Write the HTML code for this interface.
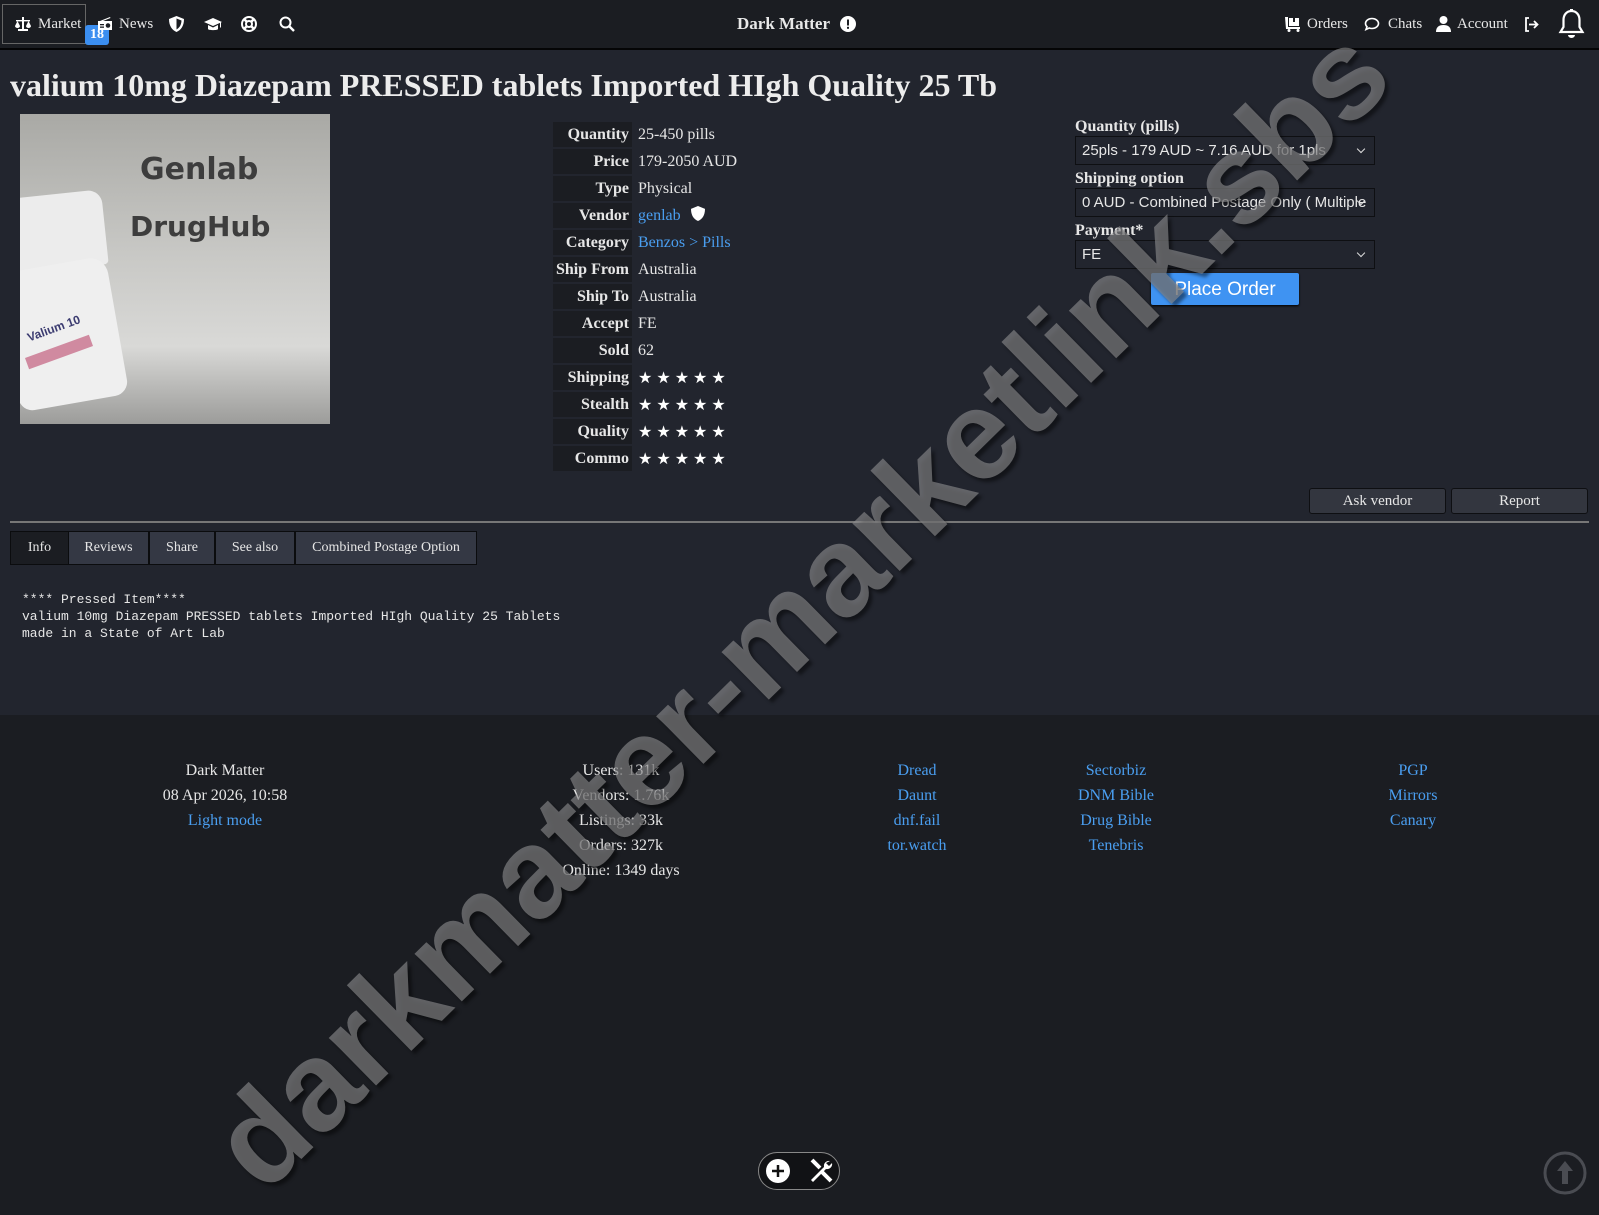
<!DOCTYPE html>
<html><head><meta charset="utf-8"><style>
*{box-sizing:border-box;margin:0;padding:0}
html,body{width:1599px;height:1199px;overflow:hidden;background:#1b1d22;font-family:"Liberation Serif",serif;color:#e6e6e6;font-size:16px}
a{color:#4a9ef0;text-decoration:none}
.main{position:absolute;left:0;top:0;width:1599px;height:715px;background:#22252e}
.hdr{position:absolute;left:0;top:0;width:1599px;height:50px;background:#1b1d22;border-bottom:2px solid #050506}
.nav{position:absolute;top:0;height:48px;display:flex;align-items:center;font-size:15px;color:#e8e8e8}
.nav svg{fill:#fff}
.fc{position:absolute;text-align:center;line-height:25px;font-size:16px}
.tbl{position:absolute;left:553px;top:121px}
.row{display:flex;height:27px;align-items:center}
.row .l{width:79px;height:25px;background:#1b1d22;text-align:right;font-weight:bold;padding-right:3px;line-height:25px;font-size:16px}
.row .v{padding-left:6px;line-height:25px}
.stars{letter-spacing:4px;font-size:16px;color:#fff;font-family:"DejaVu Sans",sans-serif}
.lbl{position:absolute;left:1075px;font-weight:bold;font-size:16px}
.sel{position:absolute;left:1075px;width:300px;height:29px;border:1px solid #0e0f12;background:#22252e;font-family:"Liberation Sans",sans-serif;font-size:15px;line-height:27px;padding-left:6px;padding-right:22px;color:#e6e6e6;white-space:nowrap;overflow:hidden}
.sel:after{content:"";position:absolute;right:10px;top:9px;width:5px;height:5px;border-right:1.5px solid #ddd;border-bottom:1.5px solid #ddd;transform:rotate(45deg)}
.btn{position:absolute;height:26px;background:#33363f;border:1px solid #0e0f12;border-radius:3px;text-align:center;line-height:24px;font-size:15px}
.tab{position:absolute;top:531px;height:34px;background:#343844;border:1px solid #0b0c0e;text-align:center;line-height:32px;font-size:14px}
.wm{position:absolute;left:800px;top:608px;transform:translate(-50%,-50%) rotate(-44.5deg);font-family:"Liberation Sans",sans-serif;font-weight:bold;font-size:127px;color:rgba(140,140,142,.62);white-space:nowrap;text-shadow:0 5px 3px rgba(0,0,0,.45);line-height:1}
</style></head><body>
<div class="main"></div>
<div class="hdr"></div>
<div style="position:absolute;left:2px;top:4px;width:84px;height:40px;border:1px solid #666;"></div>
<div class="nav" style="left:14px"><svg width="18" height="16" viewBox="0 0 18 16"><path d="M8 1h2v12h4v2H4v-2h4z"/><path d="M2 4h14v1.4H2z"/><path d="M3.5 5L1 10a2.5 2 0 0 0 5 0zM14.5 5L12 10a2.5 2 0 0 0 5 0z"/></svg><span style="margin-left:6px">Market</span></div>
<div style="position:absolute;left:85px;top:25px;width:24px;height:20px;background:#3b8ef0;border-radius:3px;color:#fff;font-weight:bold;font-size:14px;text-align:center;line-height:20px">18</div>
<div class="nav" style="left:97px"><svg width="16" height="14" viewBox="0 0 16 14"><path d="M1 4h14v9H1z"/><path d="M3 4L13 0l.5 1L6 4z"/><circle cx="11" cy="8.5" r="2.3" fill="#1b1d22"/><rect x="3" y="7" width="4" height="1.3" fill="#1b1d22"/><rect x="3" y="9.5" width="4" height="1.3" fill="#1b1d22"/></svg><span style="margin-left:6px">News</span></div>
<div class="nav" style="left:169px"><svg width="15" height="16" viewBox="0 0 15 16"><path d="M7.5 0L15 3c0 7-3 11-7.5 13C3 14 0 10 0 3z"/><path d="M7.5 2.5v11c2.5-1.5 4.8-4 5-9z" fill="#1b1d22"/></svg></div>
<div class="nav" style="left:204px"><svg width="18" height="15" viewBox="0 0 18 15"><path d="M9 1L0 5l9 4 9-4z"/><path d="M4 8v4c0 1.5 10 1.5 10 0V8L9 10.5z"/><path d="M16 5.5v5h1v-5z"/></svg></div>
<div class="nav" style="left:241px"><svg width="16" height="16" viewBox="0 0 16 16"><circle cx="8" cy="8" r="7" fill="none" stroke="#fff" stroke-width="2"/><circle cx="8" cy="8" r="3" fill="none" stroke="#fff" stroke-width="2"/><path d="M3 3l3 3M13 3l-3 3M3 13l3-3M13 13l-3-3" stroke="#fff" stroke-width="2.5"/></svg></div>
<div class="nav" style="left:279px"><svg width="16" height="16" viewBox="0 0 16 16"><circle cx="6.5" cy="6.5" r="5" fill="none" stroke="#fff" stroke-width="2"/><path d="M10 10l5 5" stroke="#fff" stroke-width="2.4"/></svg></div>
<div class="nav" style="left:737px;font-weight:bold;font-size:17px">Dark Matter</div>
<div class="nav" style="left:840px"><svg width="16" height="16" viewBox="0 0 16 16"><circle cx="8" cy="8" r="8"/><rect x="7" y="3.5" width="2" height="6" fill="#1b1d22"/><rect x="7" y="10.8" width="2" height="2" fill="#1b1d22"/></svg></div>
<div class="nav" style="left:1285px"><svg width="16" height="16" viewBox="0 0 16 16"><path d="M0 1h3v10h12v2H1z"/><rect x="4" y="2" width="10" height="8"/><rect x="8" y="2" width="2" height="4" fill="#1b1d22"/><circle cx="4" cy="14.5" r="1.5"/><circle cx="13" cy="14.5" r="1.5"/></svg><span style="margin-left:6px">Orders</span></div>
<div class="nav" style="left:1364px"><svg width="16" height="15" viewBox="0 0 16 15"><path d="M8 1.5c3.6 0 6.5 2.3 6.5 5s-2.9 5-6.5 5c-1 0-2-.2-2.8-.5L2 12.5l1-2.8C2 8.8 1.5 7.7 1.5 6.5c0-2.7 2.9-5 6.5-5z" fill="none" stroke="#fff" stroke-width="1.6"/></svg><span style="margin-left:8px">Chats</span></div>
<div class="nav" style="left:1436px"><svg width="15" height="16" viewBox="0 0 15 16"><circle cx="7.5" cy="4" r="4"/><path d="M0 16c0-5 3-7 7.5-7s7.5 2 7.5 7z"/></svg><span style="margin-left:6px">Account</span></div>
<div class="nav" style="left:1524px"><svg width="15" height="15" viewBox="0 0 15 15"><path d="M5 1H2v13h3" fill="none" stroke="#fff" stroke-width="1.8"/><path d="M5 7.5h8M10 4l3.5 3.5L10 11" fill="none" stroke="#fff" stroke-width="1.8"/></svg></div>
<div class="nav" style="left:1558px"><svg width="27" height="30" viewBox="0 0 27 30"><path d="M13.5 2c-5 0-8 4-8 9v7l-3 5h22l-3-5v-7c0-5-3-9-8-9z" fill="none" stroke="#fff" stroke-width="2.2"/><rect x="12" y="0" width="3" height="3"/><path d="M10 26h7a3.5 3 0 0 1-7 0z"/></svg></div>

<div style="position:absolute;left:10px;top:67px;font-size:32px;font-weight:bold;color:#ececec">valium 10mg Diazepam PRESSED tablets Imported HIgh Quality 25 Tb</div>

<div style="position:absolute;left:20px;top:114px;width:310px;height:310px;background:linear-gradient(180deg,#a9a9a5 0%,#c8c8c5 45%,#d9d9d7 75%,#9c9c9a 100%);overflow:hidden">
<div style="position:absolute;left:120px;top:38px;font-family:'DejaVu Sans',sans-serif;font-weight:bold;font-size:30px;color:#3d3d3d">Genlab</div>
<div style="position:absolute;left:110px;top:96px;font-family:'DejaVu Sans',sans-serif;font-weight:bold;font-size:28px;color:#3d3d3d">DrugHub</div>
<div style="position:absolute;left:-10px;top:80px;width:95px;height:75px;background:#ececec;border-radius:10px 14px 4px 4px;transform:rotate(-6deg)"></div>
<div style="position:absolute;left:-12px;top:150px;width:110px;height:140px;background:#efefef;border-radius:10px 18px 14px 14px;transform:rotate(-10deg)"></div>
<div style="position:absolute;left:5px;top:232px;width:68px;height:12px;background:#d08aa0;transform:rotate(-20deg)"></div>
<div style="position:absolute;left:5px;top:205px;width:70px;height:10px;font-family:'Liberation Sans',sans-serif;font-weight:bold;font-size:12px;color:#3b3b70;transform:rotate(-20deg)">Valium 10</div>
</div>

<div class="tbl">
<div class="row"><div class="l">Quantity</div><div class="v">25-450 pills</div></div>
<div class="row"><div class="l">Price</div><div class="v">179-2050 AUD</div></div>
<div class="row"><div class="l">Type</div><div class="v">Physical</div></div>
<div class="row"><div class="l">Vendor</div><div class="v"><a>genlab</a> <svg width="14" height="15" viewBox="0 0 15 16" style="margin-left:6px;vertical-align:-1px"><path d="M7.5 0L15 3c0 7-3 11-7.5 13C3 14 0 10 0 3z" fill="#fff"/></svg></div></div>
<div class="row"><div class="l">Category</div><div class="v"><a>Benzos &gt; Pills</a></div></div>
<div class="row"><div class="l">Ship From</div><div class="v">Australia</div></div>
<div class="row"><div class="l">Ship To</div><div class="v">Australia</div></div>
<div class="row"><div class="l">Accept</div><div class="v">FE</div></div>
<div class="row"><div class="l">Sold</div><div class="v">62</div></div>
<div class="row"><div class="l">Shipping</div><div class="v stars">★★★★★</div></div>
<div class="row"><div class="l">Stealth</div><div class="v stars">★★★★★</div></div>
<div class="row"><div class="l">Quality</div><div class="v stars">★★★★★</div></div>
<div class="row"><div class="l">Commo</div><div class="v stars">★★★★★</div></div>
</div>

<div class="lbl" style="top:118px">Quantity (pills)</div>
<div class="sel" style="top:136px">25pls - 179 AUD ~ 7.16 AUD for 1pls</div>
<div class="lbl" style="top:170px">Shipping option</div>
<div class="sel" style="top:188px">0 AUD - Combined Postage Only ( Multiple</div>
<div class="lbl" style="top:222px">Payment*</div>
<div class="sel" style="top:240px">FE</div>
<div style="position:absolute;left:1151px;top:273px;width:148px;height:32px;background:#3f93f2;border-radius:2px;font-family:'Liberation Sans',sans-serif;font-size:19px;color:#fff;text-align:center;line-height:34px;box-shadow:0 1px 2px #000">Place Order</div>

<div class="btn" style="left:1309px;top:488px;width:137px">Ask vendor</div>
<div class="btn" style="left:1451px;top:488px;width:137px">Report</div>
<div style="position:absolute;left:10px;top:521px;width:1579px;height:2px;background:#777"></div>

<div class="tab" style="left:10px;width:59px;background:#1b1d22">Info</div>
<div class="tab" style="left:68px;width:81px">Reviews</div>
<div class="tab" style="left:149px;width:66px">Share</div>
<div class="tab" style="left:215px;width:80px">See also</div>
<div class="tab" style="left:295px;width:182px">Combined Postage Option</div>

<pre style="position:absolute;left:22px;top:591px;font-family:'Liberation Mono',monospace;font-size:13px;line-height:17px;color:#e6e6e6">**** Pressed Item****
valium 10mg Diazepam PRESSED tablets Imported HIgh Quality 25 Tablets
made in a State of Art Lab</pre>

<div class="fc" style="left:125px;top:758px;width:200px">Dark Matter<br>08 Apr 2026, 10:58<br><a>Light mode</a></div>
<div class="fc" style="left:521px;top:758px;width:200px">Users: 131k<br>Vendors: 1.76k<br>Listings: 33k<br>Orders: 327k<br>Online: 1349 days</div>
<div class="fc" style="left:867px;top:758px;width:100px"><a>Dread</a><br><a>Daunt</a><br><a>dnf.fail</a><br><a>tor.watch</a></div>
<div class="fc" style="left:1056px;top:758px;width:120px"><a>Sectorbiz</a><br><a>DNM Bible</a><br><a>Drug Bible</a><br><a>Tenebris</a></div>
<div class="fc" style="left:1363px;top:758px;width:100px"><a>PGP</a><br><a>Mirrors</a><br><a>Canary</a></div>

<div style="position:absolute;left:758px;top:1152px;width:82px;height:38px;border:1px solid #888;border-radius:19px;background:#111215"></div>
<svg style="position:absolute;left:766px;top:1159px" width="24" height="24" viewBox="0 0 24 24"><circle cx="12" cy="12" r="12" fill="#fff"/><path d="M12 6v12M6 12h12" stroke="#111" stroke-width="2.5"/></svg>
<svg style="position:absolute;left:808px;top:1158px" width="26" height="26" viewBox="0 0 26 26"><path d="M4 2l8 8M14 14l9 9" stroke="#fff" stroke-width="4"/><path d="M22 3a5 5 0 0 0-6 6L3 22l2 2 13-13a5 5 0 0 0 6-6l-3 3-3-3z" fill="#fff"/></svg>
<svg style="position:absolute;left:1543px;top:1151px" width="44" height="44" viewBox="0 0 44 44"><circle cx="22" cy="22" r="20" fill="none" stroke="#4a4c52" stroke-width="3"/><path d="M22 10l-8 10h5v13h6V20h5z" fill="#4a4c52"/></svg>

<div class="wm">darkmatter-marketlink.sbs</div>
</body></html>
